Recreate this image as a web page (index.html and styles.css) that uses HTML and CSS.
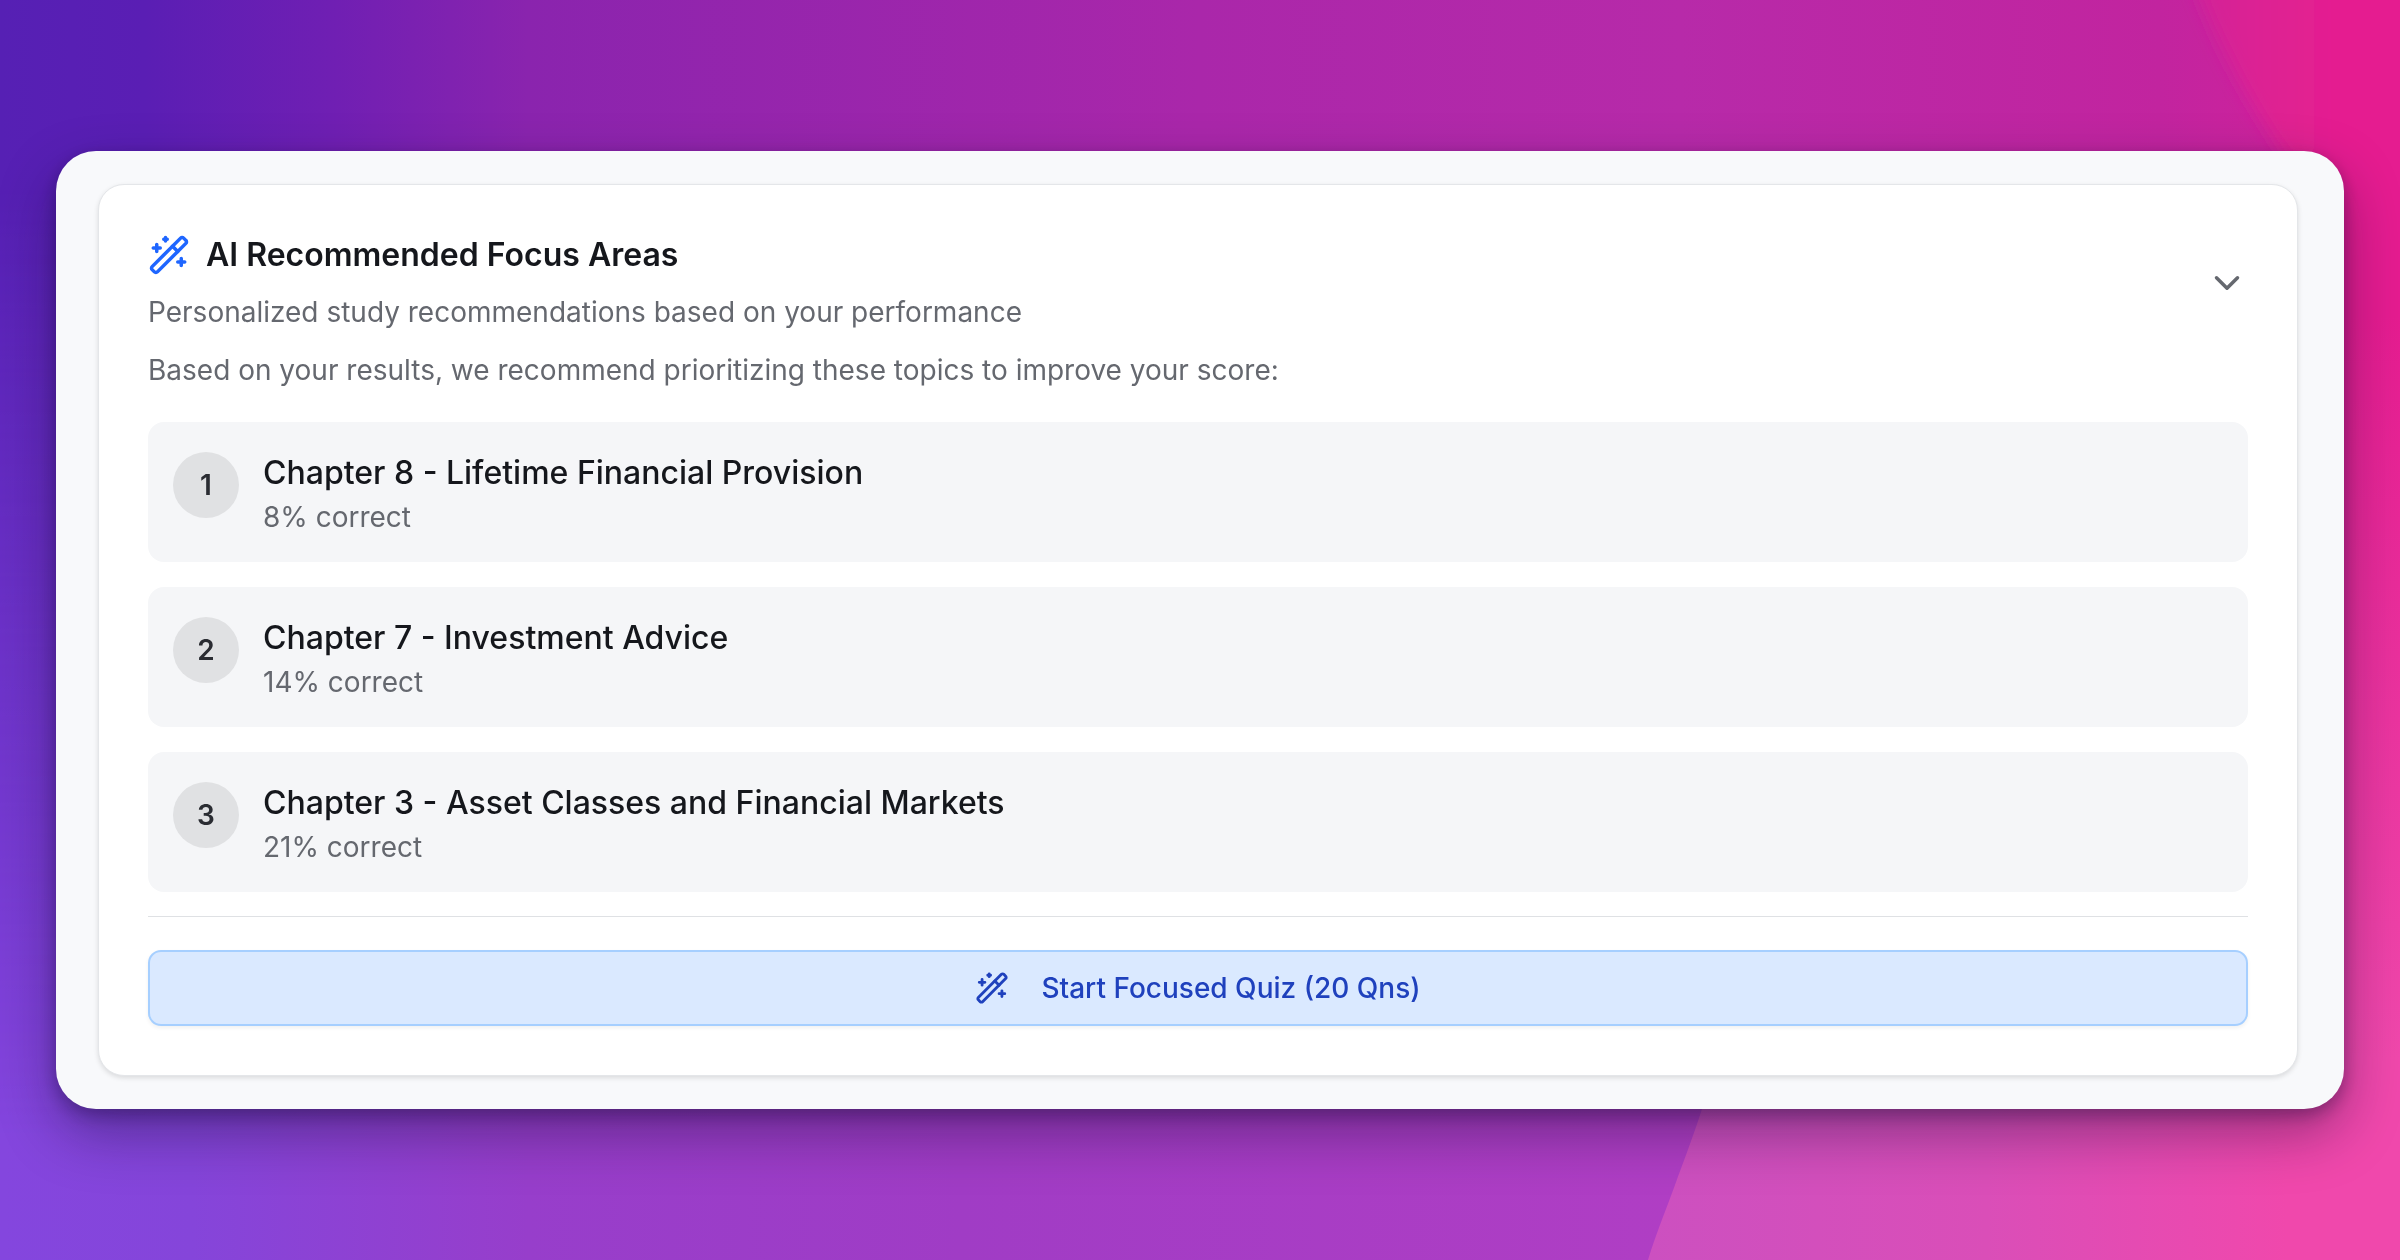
FILE: index.html
```html
<!DOCTYPE html>
<html lang="en">
<head>
    <meta charset="UTF-8">
    <meta name="viewport" content="width=device-width, initial-scale=1.0">
    <title>AI Recommended Focus Areas</title>
    <link rel="stylesheet" href="styles.css">
</head>
<body>
    <svg class="backdrop" viewBox="0 0 2400 1260" preserveAspectRatio="none" aria-hidden="true">
        <defs>
            <linearGradient id="topColors">
                <stop offset="0" stop-color="#5620b4"/>
                <stop offset="0.06" stop-color="#5a1eb4"/>
                <stop offset="0.14" stop-color="#701fb3"/>
                <stop offset="0.22" stop-color="#8a24ae"/>
                <stop offset="0.5" stop-color="#aa27aa"/>
                <stop offset="0.7" stop-color="#b72aa9"/>
                <stop offset="0.9" stop-color="#c2249f"/>
                <stop offset="1" stop-color="#d8209a"/>
            </linearGradient>
            <linearGradient id="bottomColors">
                <stop offset="0" stop-color="#8446de"/>
                <stop offset="0.08" stop-color="#8545da"/>
                <stop offset="0.22" stop-color="#973ecb"/>
                <stop offset="0.4" stop-color="#a03cc5"/>
                <stop offset="0.7" stop-color="#b03ec4"/>
                <stop offset="1" stop-color="#ee45aa"/>
            </linearGradient>
            <linearGradient id="fade" x2="0" y2="1">
                <stop offset="0.15" stop-color="#000"/>
                <stop offset="0.9" stop-color="#fff"/>
            </linearGradient>
            <linearGradient id="pinkTop" x2="1" y2="0">
                <stop offset="0" stop-color="#d02398"/>
                <stop offset="0.35" stop-color="#df2092"/>
                <stop offset="0.6" stop-color="#e51f90"/>
            </linearGradient>
            <linearGradient id="pinkBottom">
                <stop offset="0" stop-color="#cc50c0"/>
                <stop offset="0.45" stop-color="#da4eb8"/>
                <stop offset="0.85" stop-color="#f048ac"/>
            </linearGradient>
            <linearGradient id="rightFade" x2="0" y2="1">
                <stop offset="0.25" stop-color="#f048ac" stop-opacity="0"/>
                <stop offset="0.84" stop-color="#f048ac"/>
            </linearGradient>
            <mask id="fadeMask">
                <rect width="2400" height="1260" fill="url(#fade)"/>
            </mask>
            <filter id="soft" x="-0.2" y="-0.2" width="1.4" height="1.4">
                <feGaussianBlur stdDeviation="8"/>
            </filter>
        </defs>
        <rect width="2400" height="1260" fill="url(#topColors)"/>
        <rect width="2400" height="1260" fill="url(#bottomColors)" mask="url(#fadeMask)"/>
        <path d="M2180 -60C2215 50 2255 110 2300 180V1300H2460V-60z" fill="url(#pinkTop)" filter="url(#soft)"/>
        <rect x="2300" width="100" height="1260" fill="url(#rightFade)"/>
        <path d="M1718 1060L1702 1109C1692 1140 1684 1160 1675 1185C1664 1215 1656 1234 1648 1260H2400V1060z" fill="url(#pinkBottom)"/>
    </svg>

    <main class="window">
        <section class="card">
            <header class="card-header">
                <div>
                    <h1>
                        <svg class="icon icon-title" viewBox="0 0 24 24" aria-hidden="true">
                            <path d="m21.64 3.64-1.28-1.28a1.21 1.21 0 0 0-1.72 0L2.36 18.64a1.21 1.21 0 0 0 0 1.72l1.28 1.28a1.2 1.2 0 0 0 1.72 0L21.64 5.36a1.2 1.2 0 0 0 0-1.72"/>
                            <path d="m14 7 3 3M5 6v4M19 14v4M10 2v2M7 8H3M21 16h-4M11 3H9"/>
                        </svg>
                        AI Recommended Focus Areas
                    </h1>
                    <p class="muted">Personalized study recommendations based on your performance</p>
                </div>
                <button class="toggle" type="button" aria-label="Toggle focus areas" aria-expanded="true">
                    <svg class="icon" viewBox="0 0 24 24" aria-hidden="true">
                        <path d="m6 9 6 6 6-6"/>
                    </svg>
                </button>
            </header>

            <p class="intro muted">Based on your results, we recommend prioritizing these topics to improve your score:</p>

            <ol class="topics">
                <li class="topic">
                    <span class="rank">1</span>
                    <div>
                        <h2>Chapter 8 - Lifetime Financial Provision</h2>
                        <p class="muted">8% correct</p>
                    </div>
                </li>
                <li class="topic">
                    <span class="rank">2</span>
                    <div>
                        <h2>Chapter 7 - Investment Advice</h2>
                        <p class="muted">14% correct</p>
                    </div>
                </li>
                <li class="topic">
                    <span class="rank">3</span>
                    <div>
                        <h2>Chapter 3 - Asset Classes and Financial Markets</h2>
                        <p class="muted">21% correct</p>
                    </div>
                </li>
            </ol>

            <div class="card-footer">
                <button class="btn" type="button">
                    <svg class="icon" viewBox="0 0 24 24" aria-hidden="true">
                        <path d="m21.64 3.64-1.28-1.28a1.21 1.21 0 0 0-1.72 0L2.36 18.64a1.21 1.21 0 0 0 0 1.72l1.28 1.28a1.2 1.2 0 0 0 1.72 0L21.64 5.36a1.2 1.2 0 0 0 0-1.72"/>
                        <path d="m14 7 3 3M5 6v4M19 14v4M10 2v2M7 8H3M21 16h-4M11 3H9"/>
                    </svg>
                    Start Focused Quiz (20 Qns)
                </button>
            </div>
        </section>
    </main>
</body>
</html>
```

FILE: styles.css
```css
* {
    box-sizing: border-box;
}

body {
    margin: 0;
    min-height: 100vh;
    padding: 0 56px;
    display: flex;
    align-items: center;
    font-family: Inter, "Liberation Sans", sans-serif;
    font-size: 28px;
    line-height: 40px;
    color: #15171c;
    background-color: #8c2ab4;
}

h1, h2, p, ol {
    margin: 0;
    padding: 0;
}

.backdrop {
    position: fixed;
    top: 0;
    left: 0;
    z-index: -1;
    width: 100%;
    height: 100%;
}

.window {
    flex: 1;
    padding: 33px 46px 33px 42px;
    border-radius: 40px;
    background: #f8f9fb;
    box-shadow: 0 24px 56px rgba(20, 10, 50, 0.4), 0 6px 16px rgba(20, 10, 50, 0.3);
}

.card {
    padding: 49px;
    border: 1px solid #e4e6e9;
    border-radius: 26px;
    background: #fff;
    box-shadow: 0 2px 5px rgba(0, 0, 0, 0.12);
}

.card-header {
    display: flex;
    align-items: center;
    justify-content: space-between;
}

h1 {
    display: flex;
    align-items: center;
    gap: 16px;
    margin-bottom: 16px;
    font-size: 32px;
    line-height: 42px;
    font-weight: 600;
}

h2 {
    font-size: 32px;
    line-height: 48px;
    font-weight: 500;
}

.muted {
    color: #65686f;
}

.icon {
    flex: none;
    width: 34px;
    height: 34px;
    fill: none;
    stroke: currentColor;
    stroke-width: 2;
    stroke-linecap: round;
    stroke-linejoin: round;
}

.icon-title,
.toggle .icon {
    width: 42px;
    height: 42px;
}

.icon-title {
    color: #1f66ff;
}

.toggle {
    display: flex;
    padding: 0;
    border: 0;
    background: none;
    color: #65686f;
    cursor: pointer;
}

.intro {
    margin: 18px 0 32px;
}

.topics {
    display: flex;
    flex-direction: column;
    gap: 25px;
    list-style: none;
}

.topic {
    display: flex;
    align-items: flex-start;
    gap: 24px;
    padding: 27px 25px 25px;
    border-radius: 16px;
    background: #f5f6f8;
}

.rank {
    display: flex;
    flex: none;
    align-items: center;
    justify-content: center;
    width: 66px;
    height: 66px;
    margin-top: 3px;
    border-radius: 50%;
    background: #e0e1e3;
    color: #2a2c32;
    font-weight: 600;
}

.card-footer {
    margin-top: 24px;
    padding-top: 33px;
    border-top: 1px solid #dfe1e4;
}

.btn {
    display: flex;
    align-items: center;
    justify-content: center;
    gap: 32px;
    width: 100%;
    padding: 16px;
    border: 2px solid #a6cfff;
    border-radius: 13px;
    background: #dae9ff;
    box-shadow: 0 2px 4px rgba(0, 0, 0, 0.06);
    color: #1f41bd;
    font: inherit;
    font-weight: 500;
    cursor: pointer;
}
```
